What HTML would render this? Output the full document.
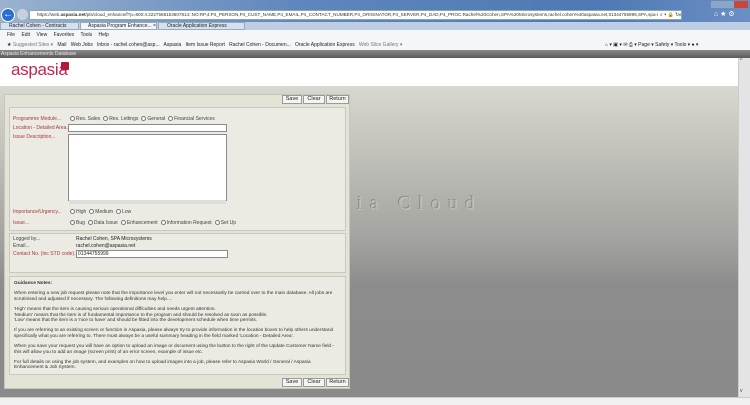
<!DOCTYPE html>
<html><head><meta charset="utf-8"><style>
*{margin:0;padding:0;box-sizing:border-box}
body{width:750px;height:405px;overflow:hidden;font-family:"Liberation Sans",sans-serif;background:#fff;position:relative}
.abs{position:absolute}
.t{font-size:5px;white-space:nowrap;position:absolute;color:#222}
.lbl{color:#a8383c;font-size:5px;position:absolute;white-space:nowrap}
.btn{position:absolute;height:9px;background:#f4f4f0;border:1px solid #999;font-size:5.5px;text-align:center;line-height:7px;color:#222}
.inp{position:absolute;background:#fff;border:1px solid #8a8a8a}
.r{display:inline-block;width:5px;height:5px;border:1px solid #777;border-radius:50%;vertical-align:middle;margin:0 1px 0 3px;background:#fff}
.sec{position:absolute;border:1px solid #c8c8c0;background:#ebebe3;left:9px;width:337px}
.g{font-size:4.8px;color:#333;line-height:5.4px}
</style></head><body>
<!-- title bar -->
<div class="abs" style="left:0;top:0;width:750px;height:22px;background:linear-gradient(90deg,#9ab2cf,#5f86bd 40%,#4f78b4 80%,#6a8fc4)"></div>
<div class="abs" style="left:1px;top:8px;width:14px;height:14px;border-radius:50%;background:#2a6ed0;border:1px solid #fff;color:#fff;font-size:10px;line-height:11px;text-align:center">←</div>
<div class="abs" style="left:17px;top:9px;width:11px;height:11px;border-radius:50%;background:#c8d0dc"></div>
<div class="abs" style="left:29px;top:10px;width:653px;height:10px;background:#fff;border:1px solid #8aa;overflow:hidden">
<div class="t" style="left:7px;top:1px;color:#333;font-size:4.6px">https://web.<b>aspasia.net</b>/pls/cloud_enhance/f?p=800:4:2227568153607814::NO:RP,4:P4_PERSON,P4_CUST_NAME,P4_EMAIL,P4_CONTACT_NUMBER,P4_ORIGINATOR,P4_SERVER,P4_DAD,P4_PROC:Rachel%20Cohen,SPA%20Microsystems,rachel.cohen%40aspasia.net,01344755999,SPA,spa-intel2,e_agent_sites,e_agent</div>
<div class="t" style="left:628px;top:1px;background:#fff;color:#333;padding-left:2px">⌕ ▾ 🔒 ↻</div>
</div>
<div class="abs" style="left:711px;top:1px;width:37px;height:7px;background:linear-gradient(90deg,#8aa6c8 0 36%,#8aa6c8 36% 62%,#c8463a 62%)"></div>
<div class="t" style="left:714px;top:10px;color:#fff;font-size:7px">⌂ ★ ⚙</div>
<!-- tabs -->
<div class="abs" style="left:0;top:22px;width:750px;height:8px;background:#bccde4"></div>
<div class="abs" style="left:0;top:22px;width:79px;height:8px;background:#d6e0ee;border:1px solid #9ab"></div>
<div class="t" style="left:9px;top:23px">Rachel Cohen - Contracts</div>
<div class="abs" style="left:80px;top:22px;width:77px;height:8px;background:#f2f5fa;border:1px solid #9ab"></div>
<div class="t" style="left:88px;top:23px">Aspasia Program Enhance...  ×</div>
<div class="abs" style="left:158px;top:22px;width:87px;height:8px;background:#d6e0ee;border:1px solid #9ab"></div>
<div class="t" style="left:167px;top:23px">Oracle Application Express</div>
<!-- menu -->
<div class="abs" style="left:0;top:30px;width:750px;height:20px;background:#f4f6f9"></div>
<div class="t" style="left:7px;top:32px;word-spacing:5px">File Edit View Favorites Tools Help</div>
<div class="t" style="left:7px;top:42px">★ <span style="color:#777">Suggested Sites ▾</span> &nbsp; Mail &nbsp; Web Jobs &nbsp; Inbox - rachel.cohen@asp... &nbsp; Aspasia &nbsp; Item Issue Report &nbsp; Rachel Cohen - Documen... &nbsp; Oracle Application Express &nbsp; <span style="color:#777">Web Slice Gallery ▾</span></div>
<div class="t" style="left:605px;top:42px">⌂ ▾ ▣ ▾ ✉ ⎙ ▾ Page ▾ Safety ▾ Tools ▾ ● ▾</div>
<!-- header bar -->
<div class="abs" style="left:0;top:50px;width:750px;height:8px;background:linear-gradient(#8a8a8a,#5a5a5a)"></div>
<div class="t" style="left:1px;top:51px;color:#e8e8e8">Aspasia Enhancements Database</div>
<!-- logo area -->
<div class="abs" style="left:0;top:58px;width:738px;height:28px;background:#fff"></div>
<div class="abs" style="left:11px;top:60px;font-size:17px;color:#c4244e;letter-spacing:-0.3px">aspasia</div>
<div class="abs" style="left:61px;top:62px;width:8px;height:8px;background:#b01838;border-radius:1px"></div>
<!-- gray background -->
<div class="abs" style="left:0;top:86px;width:738px;height:311px;background:linear-gradient(#d8d8d0 0px,#b6b6b0 100px,#a4a4a0 150px,#8c8c8c 200px,#8a8a8a)"></div>
<div class="abs" style="left:357px;top:193px;font-family:'Liberation Serif',serif;font-size:19px;letter-spacing:7.5px;color:#b4b4ae;text-shadow:-0.5px -0.5px 0 #707070,0.5px 0.5px 0 #d0d0cc">ia Cloud</div>
<!-- scrollbar -->
<div class="abs" style="left:738px;top:58px;width:12px;height:339px;background:#e4e4e4;border-left:1px solid #ccc"></div>
<div class="t" style="left:740px;top:58px;color:#444">^</div>
<div class="t" style="left:740px;top:388px;color:#444">v</div>
<!-- status bar -->
<div class="abs" style="left:0;top:397px;width:750px;height:8px;background:#f0f0f0;border-top:1px solid #ccc"></div>
<!-- panel -->
<div class="abs" style="left:4px;top:94px;width:346px;height:295px;background:#e3e3d6;border:1px solid #c6c6bc"></div>
<div class="btn" style="left:282px;top:95px;width:20px">Save</div>
<div class="btn" style="left:303px;top:95px;width:22px">Clear</div>
<div class="btn" style="left:326px;top:95px;width:23px">Return</div>
<div class="sec" style="top:107px;height:124px"></div>
<div class="lbl" style="left:13px;top:116px">Programme Module...</div>
<div class="t" style="left:67px;top:116px;color:#444"><span class="r"></span>Res. Sales<span class="r"></span>Res. Lettings<span class="r"></span>General<span class="r"></span>Financial Services</div>
<div class="lbl" style="left:13px;top:125px">Location - Detailed Area...</div>
<div class="inp" style="left:68px;top:124px;width:159px;height:8px"></div>
<div class="lbl" style="left:13px;top:134px">Issue Description...</div>
<div class="inp" style="left:68px;top:134px;width:159px;height:67px"></div>
<div class="abs" style="left:69px;top:200px;width:157px;height:4px;background:#ddd"></div>
<div class="lbl" style="left:13px;top:209px">Importance/Urgency...</div>
<div class="t" style="left:67px;top:209px;color:#444"><span class="r"></span>High<span class="r"></span>Medium<span class="r"></span>Low</div>
<div class="lbl" style="left:13px;top:220px">Issue...</div>
<div class="t" style="left:67px;top:220px;color:#444"><span class="r"></span>Bug<span class="r"></span>Data Issue<span class="r"></span>Enhancement<span class="r"></span>Information Request<span class="r"></span>Set Up</div>
<div class="sec" style="top:233px;height:40px"></div>
<div class="t" style="left:13px;top:236px;color:#444">Logged by...</div>
<div class="t" style="left:76px;top:236px">Rachel Cohen, SPA Microsystems</div>
<div class="t" style="left:13px;top:243px;color:#444">Email...</div>
<div class="t" style="left:76px;top:243px">rachel.cohen@aspasia.net</div>
<div class="lbl" style="left:13px;top:251px">Contact No. (inc STD code)...</div>
<div class="inp" style="left:76px;top:250px;width:152px;height:8px"></div>
<div class="t" style="left:78px;top:251px">01344755999</div>
<div class="sec" style="top:276px;height:99px;padding:4px 4px 0 4px">
<div class="g" style="font-weight:bold;margin-bottom:5px">Guidance Notes:</div>
<div class="g" style="margin-bottom:5px">When entering a new job request please note that the importance level you enter will not necessarily be carried over to the main database. All jobs are scrutinised and adjusted if necessary. The following definitions may help....</div>
<div class="g" style="margin-bottom:5px">'High' means that the item is causing serious operational difficulties and needs urgent attention.<br>'Medium' means that the item is of fundamental importance to the program and should be resolved as soon as possible.<br>'Low' means that the item is a 'nice to have' and should be fitted into the development schedule when time permits.</div>
<div class="g" style="margin-bottom:5px">If you are referring to an existing screen or function in Aspasia, please always try to provide information in the location boxes to help others understand specifically what you are referring to. There must always be a useful summary heading in the field marked 'Location - Detailed Area'.</div>
<div class="g" style="margin-bottom:5px">When you save your request you will have an option to upload an image or document using the button to the right of the Update Customer Name field - this will allow you to add an image (screen print) of an error screen, example of issue etc.</div>
<div class="g">For full details on using the job system, and examples on how to upload images into a job, please refer to Aspasia World / General / Aspasia Enhancement &amp; Job System.</div>
</div>
<div class="btn" style="left:282px;top:378px;width:20px">Save</div>
<div class="btn" style="left:303px;top:378px;width:22px">Clear</div>
<div class="btn" style="left:326px;top:378px;width:23px">Return</div>
</body></html>
